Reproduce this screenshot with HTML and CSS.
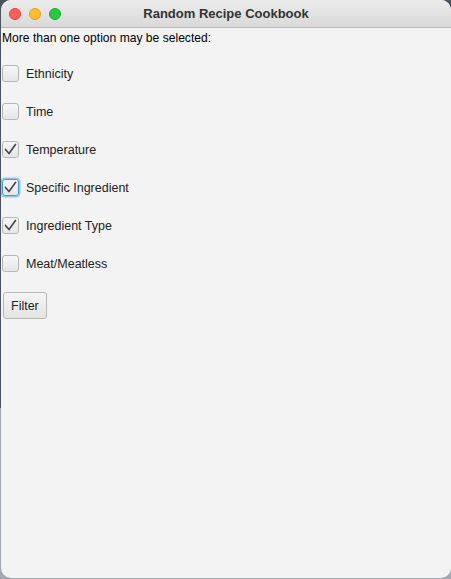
FILE: index.html
```html
<!DOCTYPE html>
<html>
<head>
<meta charset="utf-8">
<link rel="stylesheet" href="styles.css">
</head>
<body>
<div class="window">
  <div class="titlebar">
    <div class="lights">
      <span class="light red"></span>
      <span class="light yellow"></span>
      <span class="light green"></span>
    </div>
    <div class="title">Random Recipe Cookbook</div>
  </div>
  <div class="content">
    <div class="intro">More than one option may be selected:</div>
    <div class="options">
      <label class="option"><span class="box"></span><span class="label">Ethnicity</span></label>
      <label class="option"><span class="box"></span><span class="label">Time</span></label>
      <label class="option"><span class="box checked"><svg viewBox="0 0 17 17" width="17" height="17"><path d="M3.5 8.5 L7 12.5 L13.5 3.5" fill="none" stroke="#4a4a4a" stroke-width="1.7" stroke-linecap="round" stroke-linejoin="round"/></svg></span><span class="label">Temperature</span></label>
      <label class="option"><span class="box checked focused"><svg viewBox="0 0 17 17" width="17" height="17"><path d="M3.5 8.5 L7 12.5 L13.5 3.5" fill="none" stroke="#4a4a4a" stroke-width="1.7" stroke-linecap="round" stroke-linejoin="round"/></svg></span><span class="label">Specific Ingredient</span></label>
      <label class="option"><span class="box checked"><svg viewBox="0 0 17 17" width="17" height="17"><path d="M3.5 8.5 L7 12.5 L13.5 3.5" fill="none" stroke="#4a4a4a" stroke-width="1.7" stroke-linecap="round" stroke-linejoin="round"/></svg></span><span class="label">Ingredient Type</span></label>
      <label class="option"><span class="box"></span><span class="label">Meat/Meatless</span></label>
    </div>
    <button class="filter">Filter</button>
  </div>
</div>
</body>
</html>
```

FILE: styles.css
```css
html, body {
  margin: 0;
  padding: 0;
}
body {
  width: 451px;
  height: 579px;
  background: linear-gradient(to bottom, #4b5561 0, #4b5561 408px, #a3a8ae 408px, #a3a8ae 100%);
  font-family: "Liberation Sans", Arial, sans-serif;
  overflow: hidden;
}
.window {
  box-sizing: border-box;
  margin-left: 1px;
  width: 450px;
  height: 578px;
  background: #f3f3f3;
  border-radius: 10px;
  overflow: hidden;
  display: flex;
  flex-direction: column;
}
.titlebar {
  height: 27px;
  flex: none;
  background: linear-gradient(to bottom, #ececec, #d9d9d9);
  border-bottom: 1px solid #b9b9b9;
  display: flex;
  align-items: center;
  position: relative;
}
.lights {
  display: flex;
  gap: 8px;
  padding-left: 8px;
}
.light {
  width: 12px;
  height: 12px;
  border-radius: 50%;
  display: block;
}
.red { background: #fe5f57; border: 0.5px solid #e14640; box-sizing: border-box; }
.yellow { background: #febc2e; border: 0.5px solid #dfa023; box-sizing: border-box; }
.green { background: #28c840; border: 0.5px solid #1aab29; box-sizing: border-box; }
.title {
  position: absolute;
  left: 0;
  right: 0;
  text-align: center;
  font-weight: bold;
  font-size: 13px;
  color: #333;
}
.content {
  flex: 1;
  padding: 2px 0 0 1px;
}
.intro {
  font-size: 12.1px;
  color: #000;
  line-height: 16px;
}
.options {
  display: flex;
  flex-direction: column;
  gap: 21px;
  margin-top: 19px;
}
.option {
  display: flex;
  align-items: center;
  height: 17px;
  gap: 7px;
}
.box {
  box-sizing: border-box;
  width: 17px;
  height: 17px;
  border: 1px solid #b6b6b6;
  border-radius: 3px;
  background: linear-gradient(to bottom, #f6f6f6, #e6e6e6);
  display: flex;
  align-items: center;
  justify-content: center;
}
.box svg {
  display: block;
  flex: none;
}
.box.focused {
  border: 1px solid #3a9ee0;
  box-shadow: 0 0 0 1.5px #8ccaf0;
}
.label {
  font-size: 12.5px;
  color: #222;
}
.filter {
  display: block;
  margin: 20px 0 0 1px;
  height: 27px;
  padding: 0 7px;
  font-family: "Liberation Sans", Arial, sans-serif;
  font-size: 12.5px;
  color: #222;
  border: 1px solid #b8b8b8;
  border-radius: 3px;
  background: linear-gradient(to bottom, #f5f5f5, #e4e4e4);
}
```
